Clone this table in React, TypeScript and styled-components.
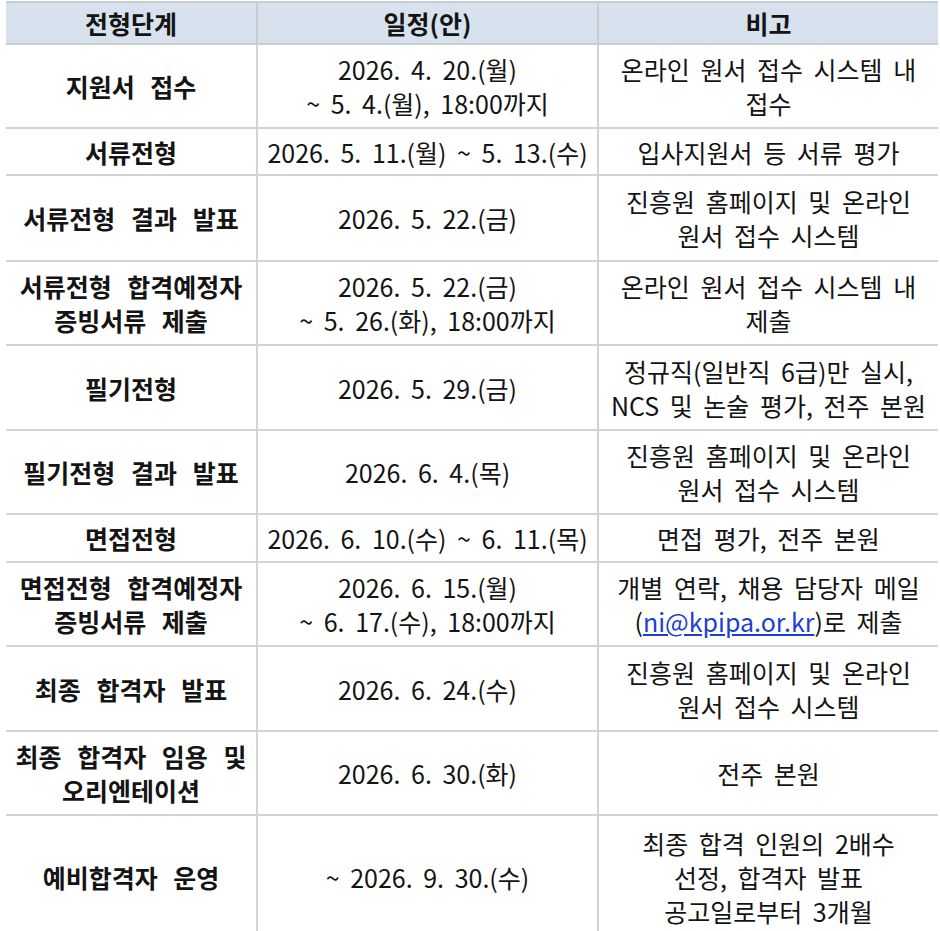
import React from 'react';
import styled, { createGlobalStyle } from 'styled-components';

const GlobalStyle = createGlobalStyle`
  html, body {
    margin: 0;
    padding: 0;
    background: #ffffff;
  }
  body {
    font-family: 'Noto Sans CJK KR', 'Noto Sans', sans-serif;
    color: #141414;
  }
`;

const Page = styled.div`
  padding: 1px 6px 0 6px;
  width: 928px;
  overflow: hidden;
`;

const Table = styled.table`
  width: 928px;
  border-collapse: collapse;
  table-layout: fixed;
`;

const HeadCell = styled.th<{ $w: number }>`
  width: ${(p) => p.$w}px;
  height: 40px;
  background: #d7e2ee;
  border-top: 2px solid #c9cdd2;
  border-bottom: 2px solid #c9cdd2;
  border-left: 2px solid #c9cdd2;
  font-size: 25px;
  line-height: 30px;
  font-weight: 700;
  padding: 0;
  text-align: center;
  &:first-child {
    border-left: none;
  }
`;

const Row = styled.tr<{ $h: number }>`
  height: ${(p) => p.$h}px;
`;

const Cell = styled.td<{ $bold?: boolean; $last?: boolean }>`
  border-left: 2px solid #d3d3d3;
  border-bottom: ${(p) => (p.$last ? 'none' : '2px solid #d3d3d3')};
  font-size: 25px;
  line-height: 34px;
  font-weight: ${(p) => (p.$bold ? 700 : 400)};
  text-align: center;
  vertical-align: middle;
  padding: 0;
  white-space: nowrap;
  word-spacing: ${(p) => (p.$bold ? 10 : 5)}px;
  &:first-child {
    border-left: none;
  }
`;

const Mail = styled.a`
  color: #1d3fd0;
  text-decoration: underline;
  word-spacing: 0;
`;

type Item = {
  step: React.ReactNode;
  date: React.ReactNode;
  note: React.ReactNode;
  h: number;
};

const rows: Item[] = [
  {
    step: '지원서 접수',
    date: (<>2026. 4. 20.(월)<br />~ 5. 4.(월), 18:00까지</>),
    note: (<>온라인 원서 접수 시스템 내<br />접수</>),
    h: 84,
  },
  {
    step: '서류전형',
    date: '2026. 5. 11.(월) ~ 5. 13.(수)',
    note: '입사지원서 등 서류 평가',
    h: 47,
  },
  {
    step: '서류전형 결과 발표',
    date: '2026. 5. 22.(금)',
    note: (<>진흥원 홈페이지 및 온라인<br />원서 접수 시스템</>),
    h: 86,
  },
  {
    step: (<>서류전형 합격예정자<br />증빙서류 제출</>),
    date: (<>2026. 5. 22.(금)<br />~ 5. 26.(화), 18:00까지</>),
    note: (<>온라인 원서 접수 시스템 내<br />제출</>),
    h: 84,
  },
  {
    step: '필기전형',
    date: '2026. 5. 29.(금)',
    note: (<>정규직(일반직 6급)만 실시,<br />NCS 및 논술 평가, 전주 본원</>),
    h: 85,
  },
  {
    step: '필기전형 결과 발표',
    date: '2026. 6. 4.(목)',
    note: (<>진흥원 홈페이지 및 온라인<br />원서 접수 시스템</>),
    h: 84,
  },
  {
    step: '면접전형',
    date: '2026. 6. 10.(수) ~ 6. 11.(목)',
    note: '면접 평가, 전주 본원',
    h: 48,
  },
  {
    step: (<>면접전형 합격예정자<br />증빙서류 제출</>),
    date: (<>2026. 6. 15.(월)<br />~ 6. 17.(수), 18:00까지</>),
    note: (<>개별 연락, 채용 담당자 메일<br />(<Mail href="mailto:ni@kpipa.or.kr">ni@kpipa.or.kr</Mail>)로 제출</>),
    h: 84,
  },
  {
    step: '최종 합격자 발표',
    date: '2026. 6. 24.(수)',
    note: (<>진흥원 홈페이지 및 온라인<br />원서 접수 시스템</>),
    h: 85,
  },
  {
    step: (<>최종 합격자 임용 및<br />오리엔테이션</>),
    date: '2026. 6. 30.(화)',
    note: '전주 본원',
    h: 84,
  },
  {
    step: '예비합격자 운영',
    date: '~ 2026. 9. 30.(수)',
    note: (<>최종 합격 인원의 2배수<br />선정, 합격자 발표<br />공고일로부터 3개월</>),
    h: 122,
  },
];

export default function App() {
  return (
    <>
      <GlobalStyle />
      <Page>
        <Table>
          <thead>
            <tr>
              <HeadCell $w={250}>전형단계</HeadCell>
              <HeadCell $w={339}>일정(안)</HeadCell>
              <HeadCell $w={339}>비고</HeadCell>
            </tr>
          </thead>
          <tbody>
            {rows.map((r, i) => (
              <Row key={i} $h={r.h}>
                <Cell $bold $last={i === rows.length - 1}>{r.step}</Cell>
                <Cell $last={i === rows.length - 1}>{r.date}</Cell>
                <Cell $last={i === rows.length - 1}>{r.note}</Cell>
              </Row>
            ))}
          </tbody>
        </Table>
      </Page>
    </>
  );
}
